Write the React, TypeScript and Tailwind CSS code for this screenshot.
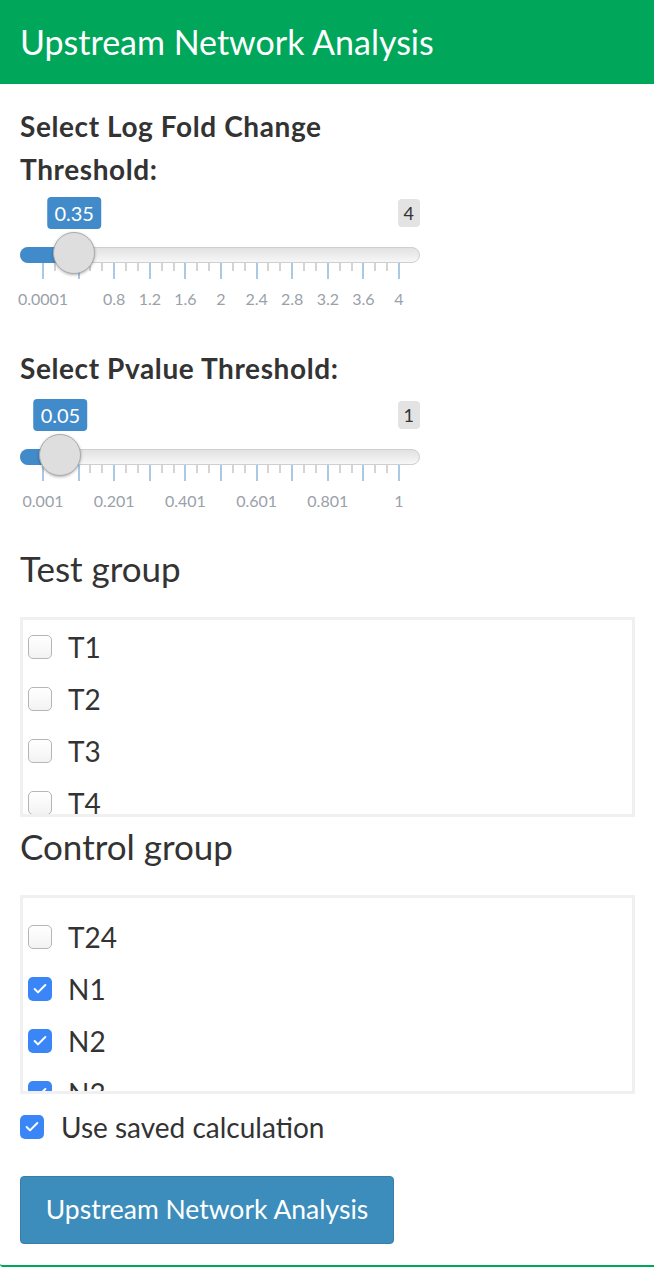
import { Check } from 'lucide-react'

interface SliderProps {
  min: number
  max: number
  value: number
  labels: (string | null)[]
  maxLabel: string
  valueLabel: string
}

const GRID_LEFT = 23
const GRID_STEP = 35.6

function Slider({ min, max, value, labels, maxLabel, valueLabel }: SliderProps) {
  const pos = GRID_LEFT + ((value - min) / (max - min)) * GRID_STEP * 10
  const ticks: { x: number; major: boolean }[] = []
  for (let i = 0; i <= 10; i++) {
    ticks.push({ x: GRID_LEFT + i * GRID_STEP, major: true })
    if (i < 10) {
      ticks.push({ x: GRID_LEFT + i * GRID_STEP + GRID_STEP / 3, major: false })
      ticks.push({ x: GRID_LEFT + i * GRID_STEP + (GRID_STEP * 2) / 3, major: false })
    }
  }
  return (
    <div className="relative h-[120px] w-[400px]">
      <div
        className="absolute top-[2px] h-8 -translate-x-1/2 rounded-[4px] bg-[#428bca] px-[7px] text-[20px] leading-8 text-white"
        style={{ left: pos }}
      >
        {valueLabel}
      </div>
      <div className="absolute right-0 top-[4px] h-7 rounded-[4px] bg-[#e3e3e3] px-[6px] text-[18px] leading-7 text-[#333]">
        {maxLabel}
      </div>
      <div className="absolute left-0 right-0 top-[52px] h-4 rounded-full border border-[#cfcfcf] bg-gradient-to-b from-[#e2e2e2] to-[#f7f7f7]" />
      <div
        className="absolute left-0 top-[52px] h-4 rounded-l-full bg-[#428bca]"
        style={{ width: pos }}
      />
      {ticks.map((t, i) => (
        <div
          key={i}
          className={
            t.major
              ? 'absolute top-[68px] h-4 w-[2px] bg-[#a9c9e6]'
              : 'absolute top-[68px] h-2 w-[2px] bg-[#d4d4d4]'
          }
          style={{ left: t.x - 1 }}
        />
      ))}
      {labels.map((l, i) =>
        l ? (
          <div
            key={i}
            className="absolute top-[94px] -translate-x-1/2 text-[16px] leading-5 text-[#9aa1a9]"
            style={{ left: GRID_LEFT + i * GRID_STEP }}
          >
            {l}
          </div>
        ) : null
      )}
      <div
        className="absolute top-[37px] h-[42px] w-[42px] -translate-x-1/2 rounded-full border border-[#ababab] bg-[#dedede] shadow-[0_1px_3px_rgba(0,0,0,0.3)]"
        style={{ left: pos }}
      />
    </div>
  )
}

function Box({ checked }: { checked: boolean }) {
  return checked ? (
    <span className="flex h-6 w-6 shrink-0 items-center justify-center rounded-[5px] bg-[#3b86f7]">
      <Check size={16} strokeWidth={3} className="text-white" />
    </span>
  ) : (
    <span className="h-6 w-6 shrink-0 rounded-[5px] border border-[#b5b5b5] bg-gradient-to-b from-white to-[#f3f3f3]" />
  )
}

function CheckRow({ label, checked }: { label: string; checked: boolean }) {
  return (
    <div className="flex h-[52px] shrink-0 items-center gap-4 pl-[5px]">
      <Box checked={checked} />
      <span className="text-[28px] leading-none text-[#333]">{label}</span>
    </div>
  )
}

const grid1 = ['0.0001', null, '0.8', '1.2', '1.6', '2', '2.4', '2.8', '3.2', '3.6', '4']
const grid2 = ['0.001', null, '0.201', null, '0.401', null, '0.601', null, '0.801', null, '1']

export default function App() {
  return (
    <div className="h-[1268px] w-[654px] overflow-hidden bg-white font-['Lato',sans-serif] text-[#333]">
      <div className="flex h-[1267px] flex-col rounded-bl-[3px] border-b-2 border-[#00a65a]">
        <div className="flex h-[84px] items-center bg-[#00a65a] px-5">
          <h3 className="text-[34px] leading-none text-white">Upstream Network Analysis</h3>
        </div>

        <div className="flex flex-col px-5 pt-[21px]">
          <label className="text-[28px] font-bold leading-[43px] tracking-[0.6px]">
            Select Log Fold Change
            <br />
            Threshold:
          </label>
          <div className="mt-1">
            <Slider min={0.0001} max={4} value={0.35} labels={grid1} maxLabel="4" valueLabel="0.35" />
          </div>

          <label className="mt-[32px] text-[28px] font-bold leading-[43px] tracking-[0.6px]">Select Pvalue Threshold:</label>
          <div className="mt-[7px]">
            <Slider min={0.001} max={1} value={0.05} labels={grid2} maxLabel="1" valueLabel="0.05" />
          </div>

          <h3 className="mt-[30px] text-[35px] leading-[43px]">Test group</h3>
          <div className="mt-[27px] flex h-[200px] w-[615px] flex-col overflow-hidden border-[3px] border-[#f0f0f0] pt-px">
            <CheckRow label="T1" checked={false} />
            <CheckRow label="T2" checked={false} />
            <CheckRow label="T3" checked={false} />
            <CheckRow label="T4" checked={false} />
          </div>

          <h3 className="mt-[8px] text-[35px] leading-[43px]">Control group</h3>
          <div className="mt-[27px] flex h-[199px] w-[615px] flex-col overflow-hidden border-[3px] border-[#f0f0f0] pt-[13px]">
            <CheckRow label="T24" checked={false} />
            <CheckRow label="N1" checked={true} />
            <CheckRow label="N2" checked={true} />
            <CheckRow label="N3" checked={true} />
          </div>

          <div className="mt-[11px] flex h-[43px] items-center gap-[17px]">
            <Box checked={true} />
            <span className="text-[28px] leading-none">Use saved calculation</span>
          </div>

          <button className="mt-[28px] h-[68px] w-[374px] rounded-[4px] border border-[#367fa9] bg-[#3c8dbc] text-[26.5px] text-white">
            Upstream Network Analysis
          </button>
        </div>
      </div>
    </div>
  )
}
